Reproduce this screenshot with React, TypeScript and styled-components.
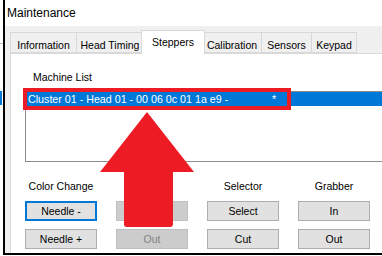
import React from "react";
import styled, {createGlobalStyle} from "styled-components";

const GlobalStyle = createGlobalStyle`
  html, body {
    margin: 0;
    padding: 0;
    background: #ffffff;
    width: 382px;
    height: 256px;
    overflow: hidden;
  }
  body {
    font-family: "Liberation Sans", Arial, sans-serif;
    font-size: 10.5px;
    color: #000000;
  }
`;

const Screen = styled.div`
  display: flex;
  width: 382px;
  height: 256px;
  overflow: hidden;
`;

const Backdrop = styled.div`
  width: 3px;
  flex: none;
  display: flex;
  flex-direction: column;
`;

const BackdropLine = styled.div`
  margin-top: 43px;
  height: 1px;
  background: #bcbcbc;
`;

const BackdropSelection = styled.div`
  margin-top: 47px;
  width: 2px;
  height: 14px;
  background: #0078d7;
`;

const Window = styled.div`
  flex: 1;
  height: 253px;
  border-left: 2px solid #000000;
  border-bottom: 2px solid #000000;
  display: flex;
  flex-direction: column;
  background: #f0f0f0;
  overflow: hidden;
`;

const TitleBar = styled.div`
  height: 26px;
  flex: none;
  background: #ffffff;
  padding-left: 2px;
  font-size: 12px;
  line-height: 26px;
`;

const Body = styled.div`
  flex: 1;
  padding: 4px 0 0 5px;
  display: flex;
  flex-direction: column;
  min-height: 0;
`;

const TabStrip = styled.div`
  display: flex;
  align-items: flex-end;
  height: 23px;
  flex: none;
`;

const Tab = styled.div<{ $width: number; $active?: boolean }>`
  position: relative;
  box-sizing: border-box;
  width: ${(p) => p.$width + (p.$active ? 4 : 0)}px;
  height: ${(p) => (p.$active ? 24 : 21)}px;
  margin: 0 ${(p) => (p.$active ? -3 : -1)}px ${(p) => (p.$active ? -1 : 0)}px
    ${(p) => (p.$active ? -2 : 0)}px;
  border: 1px solid #d9d9d9;
  border-bottom: ${(p) => (p.$active ? "none" : "1px solid #d9d9d9")};
  background: ${(p) => (p.$active ? "#ffffff" : "#f0f0f0")};
  z-index: ${(p) => (p.$active ? 2 : 1)};
  text-align: center;
  line-height: ${(p) => (p.$active ? 22 : 20)}px;
  padding-top: ${(p) => (p.$active ? 0 : 2)}px;
  white-space: nowrap;
`;

const Panel = styled.div`
  position: relative;
  flex: 1;
  background: #ffffff;
  border-top: 1px solid #d9d9d9;
  border-left: 1px solid #d9d9d9;
  display: flex;
  flex-direction: column;
  overflow: hidden;
`;

const SectionLabel = styled.div`
  margin: 17px 0 0 22px;
  line-height: 13px;
`;

const ListBox = styled.div`
  margin: 7px 0 0 14px;
  width: 420px;
  height: 69px;
  border: 1px solid #8c8c8c;
  background: #ffffff;
  flex: none;
`;

const ListRow = styled.div<{ $selected?: boolean }>`
  display: flex;
  height: 14px;
  line-height: 14px;
  padding-left: 2px;
  font-size: 10.7px;
  background: ${(p) => (p.$selected ? "#0078d7" : "transparent")};
  color: ${(p) => (p.$selected ? "#ffffff" : "#000000")};
  white-space: nowrap;
`;

const ListCell = styled.span<{ $width?: number }>`
  width: ${(p) => (p.$width ? `${p.$width}px` : "auto")};
  flex: none;
`;

const Controls = styled.div`
  margin: 18px 0 0 14px;
  display: grid;
  grid-template-columns: repeat(4, 72px);
  grid-template-rows: 13px 20px 20px;
  column-gap: 19px;
  row-gap: 8px;
`;

const GroupLabel = styled.div`
  text-align: center;
  line-height: 13px;
  margin-bottom: 1px;
`;

const Button = styled.div<{ $disabled?: boolean; $focused?: boolean }>`
  box-sizing: border-box;
  height: 20px;
  line-height: 18px;
  text-align: center;
  background: ${(p) => (p.$disabled ? "#cccccc" : "#e1e1e1")};
  border: 1px solid
    ${(p) => (p.$focused ? "#0078d7" : p.$disabled ? "#bfbfbf" : "#adadad")};
  box-shadow: ${(p) => (p.$focused ? "inset 0 0 0 1px #0078d7" : "none")};
  color: ${(p) => (p.$disabled ? "#838383" : "#000000")};
`;

const Highlight = styled.div`
  position: absolute;
  left: 12px;
  top: 34px;
  width: 268px;
  height: 22px;
  box-sizing: border-box;
  border: 4px solid #ed1c24;
  pointer-events: none;
`;

const ArrowMark = styled.svg`
  position: absolute;
  left: 89px;
  top: 58px;
  width: 94px;
  height: 115px;
  pointer-events: none;
`;

const tabs = [
  {label: "Information", width: 67},
  {label: "Head Timing", width: 68},
  {label: "Steppers", width: 60, active: true},
  {label: "Calibration", width: 60},
  {label: "Sensors", width: 51},
  {label: "Keypad", width: 46},
];

export default function App() {
  return (
    <>
      <GlobalStyle />
      <Screen>
        <Backdrop>
          <BackdropLine />
          <BackdropSelection />
        </Backdrop>
        <Window>
          <TitleBar>Maintenance</TitleBar>
          <Body>
            <TabStrip>
              {tabs.map((t) => (
                <Tab key={t.label} $width={t.width} $active={t.active}>
                  {t.label}
                </Tab>
              ))}
            </TabStrip>
            <Panel>
              <SectionLabel>Machine List</SectionLabel>
              <ListBox>
                <ListRow $selected>
                  <ListCell $width={244}>
                    Cluster 01 - Head 01 - 00 06 0c 01 1a e9 -
                  </ListCell>
                  <ListCell>*</ListCell>
                </ListRow>
              </ListBox>
              <Controls>
                <GroupLabel>Color Change</GroupLabel>
                <GroupLabel />
                <GroupLabel>Selector</GroupLabel>
                <GroupLabel>Grabber</GroupLabel>

                <Button $focused>Needle -</Button>
                <Button $disabled>In</Button>
                <Button>Select</Button>
                <Button>In</Button>

                <Button>Needle +</Button>
                <Button $disabled>Out</Button>
                <Button>Cut</Button>
                <Button>Out</Button>
              </Controls>

              <Highlight />
              <ArrowMark viewBox="0 0 94 115">
                <path
                  d="M47 0 L94 60 L73 60 L73 112 Q73 115 70 115 L27 115 Q24 115 24 112 L24 60 L0 60 Z"
                  fill="#ed1c24"
                />
              </ArrowMark>
            </Panel>
          </Body>
        </Window>
      </Screen>
    </>
  );
}
